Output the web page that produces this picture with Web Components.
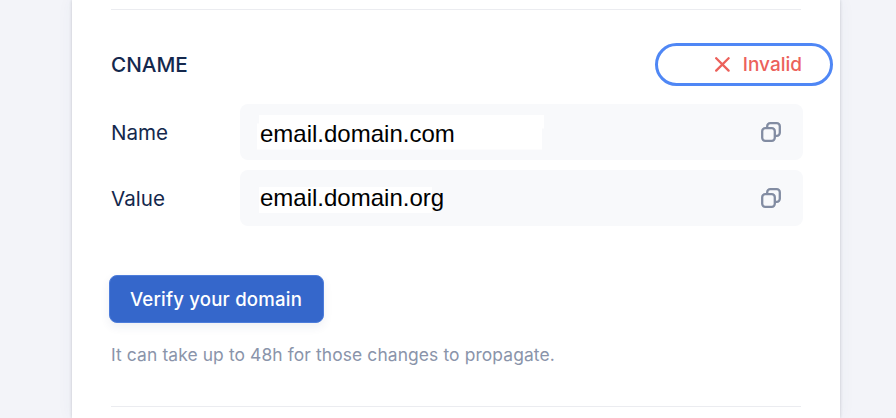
<!DOCTYPE html>
<html lang="en">
<head>
<meta charset="utf-8">
<title>Verify your domain</title>
<style>
  body {
    margin: 0;
    height: 418px;
    overflow: hidden;
    background: #f3f4f9;
    font-family: Inter, "Liberation Sans", sans-serif;
    color: #14284d;
  }
</style>
</head>
<body>
<domain-card>
  <record-header slot="header" label="CNAME">
    <status-pill>Invalid</status-pill>
  </record-header>
  <record-row label="Name" class="name">email.domain.com</record-row>
  <record-row label="Value" class="value">email.domain.org</record-row>
  <verify-button slot="action">Verify your domain</verify-button>
  <span slot="hint">It can take up to 48h for those changes to propagate.</span>
</domain-card>

<script>
class DomainCard extends HTMLElement {
  constructor() {
    super();
    this.attachShadow({ mode: "open" });
    this.shadowRoot.innerHTML = `
    <style>
      :host {
        display: block;
        box-sizing: border-box;
        height: 418px;
        margin: 0 56px 0 72px;
        padding: 9px 37px 0 39px;
        background: #ffffff;
        box-shadow: 0 0 3px rgba(40, 45, 70, 0.22), 0 0 16px rgba(60, 75, 120, 0.05);
      }

      .divider {
        height: 1px;
        margin-right: 2px;
        background: #ebecf0;
      }

      .rows {
        display: flex;
        flex-direction: column;
        gap: 10px;
        margin-top: 18px;
      }

      .action {
        margin: 49px 0 0 -2px;
      }

      .hint {
        height: 24px;
        margin: 20px 0 39px;
        font-size: 17.4px;
        line-height: 24px;
        letter-spacing: 0.12px;
        color: #8a94aa;
      }
    </style>
    <div class="divider"></div>
    <slot name="header"></slot>
    <div class="rows"><slot></slot></div>
    <div class="action"><slot name="action"></slot></div>
    <div class="hint"><slot name="hint"></slot></div>
    <div class="divider"></div>
    `;
  }
}

class RecordHeader extends HTMLElement {
  constructor() {
    super();
    this.attachShadow({ mode: "open" });
    this.shadowRoot.innerHTML = `
    <style>
      :host {
        display: flex;
        align-items: center;
        justify-content: space-between;
        height: 43px;
        margin: 33px -30px 0 0;
      }

      .label {
        font-size: 20.7px;
        font-weight: 500;
        line-height: 43px;
      }
    </style>
    <span class="label"></span>
    <slot></slot>
    `;
    this.shadowRoot.querySelector(".label").textContent = this.getAttribute("label");
  }
}

class StatusPill extends HTMLElement {
  constructor() {
    super();
    this.attachShadow({ mode: "open" });
    this.shadowRoot.innerHTML = `
    <style>
      :host {
        display: flex;
        align-items: center;
        justify-content: flex-end;
        gap: 12px;
        box-sizing: border-box;
        width: 178px;
        height: 43px;
        padding-right: 28px;
        border: 3px solid #4f87f5;
        border-radius: 22px;
        font-size: 19px;
        font-weight: 500;
        line-height: 37px;
        color: #ec615b;
      }
    </style>
    <svg width="16" height="16" viewBox="0 0 16 16" fill="none" stroke="currentColor" stroke-width="2.3" stroke-linecap="round">
      <path d="M1.2 1.2l12.4 12.4M13.6 1.2L1.2 13.6"/>
    </svg>
    <span><slot></slot></span>
    `;
  }
}

class RecordRow extends HTMLElement {
  constructor() {
    super();
    this.attachShadow({ mode: "open" });
    this.shadowRoot.innerHTML = `
    <style>
      :host {
        display: grid;
        grid-template-columns: 129px 1fr;
        align-items: center;
        height: 56px;
      }

      .label {
        height: 56px;
        font-size: 20.6px;
        line-height: 58px;
      }

      .field {
        display: flex;
        align-items: center;
        justify-content: space-between;
        box-sizing: border-box;
        height: 56px;
        padding: 0 22px 0 17px;
        border-radius: 8px;
        background: #f8f9fb;
      }

      .value {
        box-sizing: border-box;
        font-family: "Liberation Sans", Arial, sans-serif;
        font-size: 24px;
        white-space: nowrap;
        color: #000000;
        background: #ffffff;
      }

      :host(.name) .value {
        width: 287px;
        height: 35px;
        padding-left: 3px;
        line-height: 37px;
        clip-path: polygon(2px 0, 100% 0, 100% 14px, 285px 14px, 285px 100%, 0 100%, 0 9px, 2px 9px);
      }

      :host(.value) .value {
        width: 173px;
        height: 26px;
        margin: 3px 0 0 2px;
        padding-left: 1px;
        line-height: 21px;
      }

      svg {
        display: block;
      }
    </style>
    <span class="label"></span>
    <div class="field">
      <div class="value"><slot></slot></div>
      <svg width="20" height="20" viewBox="0 0 20 20" fill="none" stroke="#828ca2" stroke-width="2.3">
        <rect x="1.2" y="6.2" width="12.6" height="12.6" rx="3"/>
        <path d="M6.2 6V4.2a3 3 0 0 1 3-3h6.6a3 3 0 0 1 3 3v6.6a3 3 0 0 1-3 3H14"/>
      </svg>
    </div>
    `;
    this.shadowRoot.querySelector(".label").textContent = this.getAttribute("label");
  }
}

class VerifyButton extends HTMLElement {
  constructor() {
    super();
    this.attachShadow({ mode: "open" });
    this.shadowRoot.innerHTML = `
    <style>
      :host {
        display: block;
        width: 215px;
        height: 48px;
      }

      button {
        display: block;
        width: 100%;
        height: 100%;
        padding: 0 1px 0 0;
        border: 1px solid #4d7ddb;
        border-radius: 8px;
        background: #3567cb;
        box-shadow: 0 4px 10px rgba(50, 70, 120, 0.08);
        font-family: inherit;
        font-size: 18.6px;
        font-weight: 500;
        letter-spacing: 0.2px;
        color: #ffffff;
        cursor: pointer;
      }
    </style>
    <button type="button"><slot></slot></button>
    `;
  }
}

customElements.define("domain-card", DomainCard);
customElements.define("record-header", RecordHeader);
customElements.define("status-pill", StatusPill);
customElements.define("record-row", RecordRow);
customElements.define("verify-button", VerifyButton);
</script>
</body>
</html>
